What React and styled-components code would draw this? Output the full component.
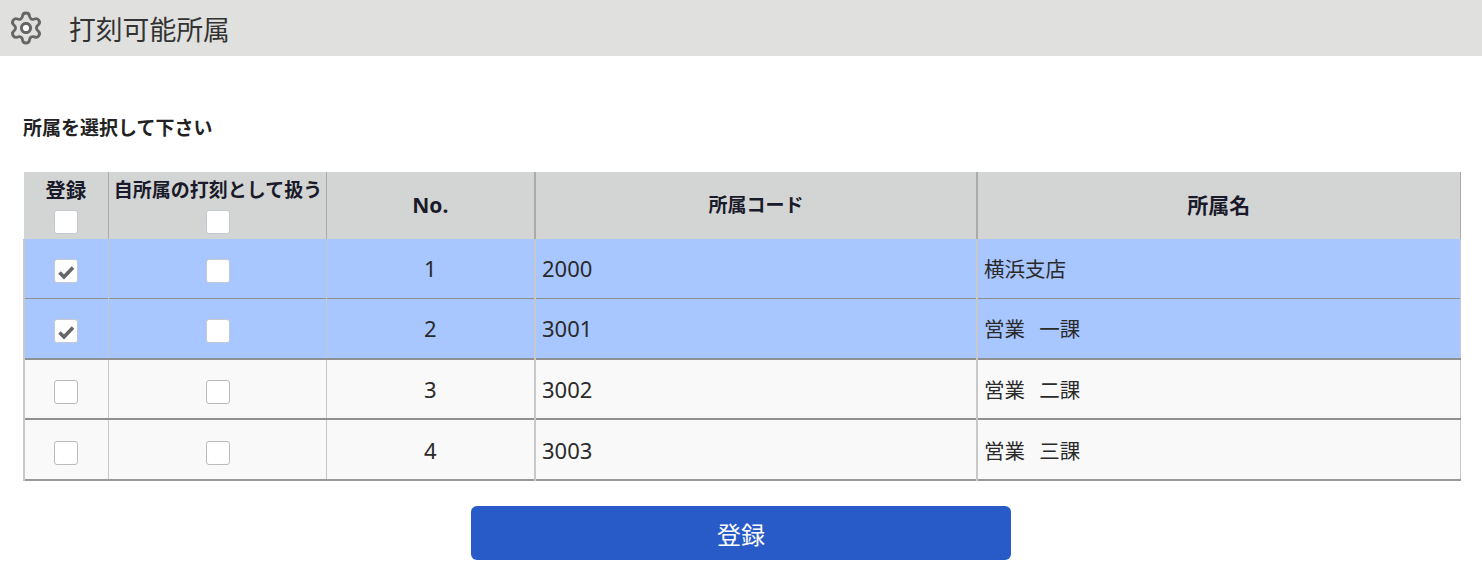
import styled, { createGlobalStyle } from "styled-components";
import { Settings } from "lucide-react";

const rows = [
  { no: 1, code: "2000", name: "横浜支店", checked: true, height: 59 },
  { no: 2, code: "3001", name: "営業 一課", checked: true, height: 61 },
  { no: 3, code: "3002", name: "営業 二課", height: 60 },
  { no: 4, code: "3003", name: "営業 三課", height: 61 },
];

function CheckBox({ checked, plain }) {
  return (
    <Box $plain={plain}>
      {checked && (
        <svg width="20" height="20" viewBox="0 0 20 20">
          <path d="M3.5 11.5 L8 16 L17 6.5" fill="none" stroke="#666" strokeWidth="3.6" />
        </svg>
      )}
    </Box>
  );
}

export default function App() {
  return (
    <>
      <GlobalStyle />
      <Header>
        <Settings size={36} strokeWidth={1.9} color="#666">
          <circle cx="12" cy="12" r="3" fill="#fff" />
        </Settings>
        <Title>打刻可能所属</Title>
      </Header>
      <Main>
        <Lead>所属を選択して下さい</Lead>
        <Table>
          <colgroup>
            <col width="84" />
            <col width="218" />
            <col width="209" />
            <col width="442" />
            <col width="483" />
          </colgroup>
          <thead>
            <tr>
              <Th $first>
                登録
                <CheckBox />
              </Th>
              <Th $nudge>
                自所属の打刻として扱う
                <CheckBox />
              </Th>
              <Th $big>No.</Th>
              <Th $wide>所属コード</Th>
              <Th $wide $big $last>所属名</Th>
            </tr>
          </thead>
          <tbody>
            {rows.map((row) => (
              <Row key={row.no} $active={row.checked} $top={row.no === 1} $height={row.height}>
                <Td $center $first>
                  <CheckBox checked={row.checked} plain={!row.checked} />
                </Td>
                <Td $center $nudge>
                  <CheckBox plain={!row.checked} />
                </Td>
                <Td $center $digits>{row.no}</Td>
                <Td $wide $digits>{row.code}</Td>
                <Td $wide $last $name>{row.name}</Td>
              </Row>
            ))}
          </tbody>
        </Table>
        <Submit type="button">登録</Submit>
      </Main>
    </>
  );
}

const GlobalStyle = createGlobalStyle`
  html, body {
    margin: 0;
    background: #fff;
    font-family: "Noto Sans", "Noto Sans CJK JP", sans-serif;
    color: #222;
  }
`;

const Header = styled.header`
  height: 56px;
  background: #e0e0de;
  display: flex;
  align-items: center;
  gap: 25px;
  padding-left: 8px;
  box-sizing: border-box;
`;

const Title = styled.h1`
  margin: 0;
  font-size: 26.8px;
  font-weight: 400;
  color: #333;
`;

const Main = styled.main`
  padding: 58px 23px 0;
`;

const Lead = styled.p`
  margin: 0 0 30px;
  font-size: 19px;
  line-height: 28px;
  font-weight: 700;
  color: #222;
`;

const Table = styled.table`
  width: 1436px;
  table-layout: fixed;
  border-collapse: collapse;
  border-bottom: 2px solid #999;
`;

const Th = styled.th`
  height: 67px;
  padding: 0 0 0 ${(props) => (props.$nudge ? "2px" : "0")};
  background: #d3d5d4;
  font-size: ${(props) => (props.$big ? "21px" : props.$first ? "20.5px" : "19px")};
  line-height: 27px;
  font-weight: 700;
  color: #1a1a2a;
  text-align: center;
  border-left: ${(props) => (props.$first ? "0" : props.$wide ? "2px solid #aaa" : "1px solid #aaa")};
  border-right: ${(props) => (props.$last ? "1px solid #aaa" : "0")};
  white-space: nowrap;
`;

const Row = styled.tr`
  height: ${(props) => props.$height}px;
  background: ${(props) => (props.$active ? "#a8c6ff" : "#f9f9f9")};
  border-top: ${(props) => (props.$top ? "0" : props.$active ? "1px solid #909090" : "2px solid #909090")};
`;

const Td = styled.td`
  padding: 0 7px 0 ${(props) => (props.$nudge ? "9px" : props.$wide ? "6px" : "7px")};
  font-size: ${(props) => (props.$digits ? "22px" : "20.5px")};
  word-spacing: ${(props) => (props.$name ? "9px" : "0")};
  color: #2a2a2a;
  text-align: ${(props) => (props.$center ? "center" : "left")};
  border-left: ${(props) => (props.$first || props.$wide ? "2px" : "1px")} solid #c8c8c8;
  border-right: ${(props) => (props.$last ? "1px solid #c8c8c8" : "0")};
`;

const Box = styled.span`
  display: flex;
  align-items: center;
  justify-content: center;
  width: 24px;
  height: 24px;
  margin: 6px auto 0;
  box-sizing: border-box;
  background: #fff;
  border: 1px solid ${(props) => (props.$plain ? "#bbb" : "#c4c8d0")};
  border-radius: 3px;
`;

const Submit = styled.button`
  display: block;
  width: 540px;
  height: 54px;
  margin: 25px 0 0 448px;
  background: #285bc8;
  color: #fff;
  border: 0;
  border-radius: 6px;
  font-family: inherit;
  font-size: 24px;
`;
